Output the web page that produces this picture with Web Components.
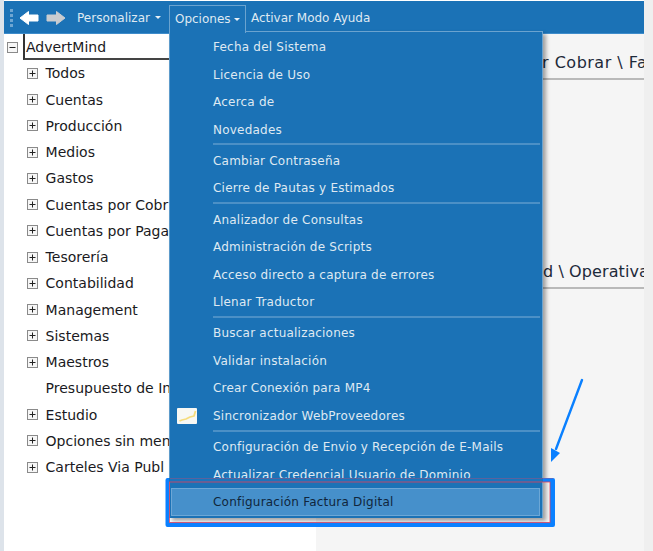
<!DOCTYPE html>
<html lang="es">
<head>
<meta charset="utf-8">
<title>AdvertMind</title>
<style>
  html, body { margin: 0; height: 100%; overflow: hidden; background: #f0f0f0; }
  body { font-family: "DejaVu Sans", sans-serif; font-size: 12px; }
</style>
</head>
<body>
<app-shell>
  <app-toolbar slot="bar"></app-toolbar>
  <tree-view slot="tree">
    <tree-node root open>AdvertMind</tree-node>
    <tree-node>Todos</tree-node>
    <tree-node>Cuentas</tree-node>
    <tree-node>Producción</tree-node>
    <tree-node>Medios</tree-node>
    <tree-node>Gastos</tree-node>
    <tree-node>Cuentas por Cobr</tree-node>
    <tree-node>Cuentas por Paga</tree-node>
    <tree-node>Tesorería</tree-node>
    <tree-node>Contabilidad</tree-node>
    <tree-node>Management</tree-node>
    <tree-node>Sistemas</tree-node>
    <tree-node>Maestros</tree-node>
    <tree-node leaf>Presupuesto de In</tree-node>
    <tree-node>Estudio</tree-node>
    <tree-node>Opciones sin men</tree-node>
    <tree-node>Carteles Via Publ</tree-node>
  </tree-view>
  <content-panel slot="content">
    <panel-title>r Cobrar \ Fa</panel-title>
    <panel-title style="letter-spacing: .1px; padding-left: 227px">d \ Operativa</panel-title>
  </content-panel>
  <options-menu slot="over">
    <menu-item>Fecha del Sistema</menu-item>
    <menu-item>Licencia de Uso</menu-item>
    <menu-item>Acerca de</menu-item>
    <menu-item>Novedades</menu-item>
    <menu-sep></menu-sep>
    <menu-item>Cambiar Contraseña</menu-item>
    <menu-item>Cierre de Pautas y Estimados</menu-item>
    <menu-sep></menu-sep>
    <menu-item>Analizador de Consultas</menu-item>
    <menu-item>Administración de Scripts</menu-item>
    <menu-item>Acceso directo a captura de errores</menu-item>
    <menu-item>Llenar Traductor</menu-item>
    <menu-sep></menu-sep>
    <menu-item>Buscar actualizaciones</menu-item>
    <menu-item>Validar instalación</menu-item>
    <menu-item>Crear Conexión para MP4</menu-item>
    <menu-item icon>Sincronizador WebProveedores</menu-item>
    <menu-sep></menu-sep>
    <menu-item>Configuración de Envio y Recepción de E-Mails</menu-item>
    <menu-item>Actualizar Credencial Usuario de Dominio</menu-item>
    <menu-item active>Configuración Factura Digital</menu-item>
  </options-menu>
  <call-out slot="over"></call-out>
</app-shell>

<script>
'use strict';
class AppShell extends HTMLElement {
  constructor() {
    super();
    this.attachShadow({ mode: 'open' }).innerHTML = `
      <style>
        :host { display: block; position: relative; width: 653px; height: 551px; overflow: hidden; }
        .app {
          display: grid;
          grid-template-columns: 4px 312px 328px 9px;
          grid-template-rows: 1px 33px 1fr;
          height: 100%;
        }
        .edge { grid-row: 1 / 4; grid-column: 1; background: #dde3ea; }
        .top { grid-row: 1; grid-column: 2 / 4; background: #fff; }
        .bar { grid-row: 2; grid-column: 2 / 4; }
        .tree { grid-row: 3; grid-column: 2; background: #fff; }
        .content { grid-row: 3; grid-column: 3; background: #f5f5f5; }
        .right { grid-row: 1 / 4; grid-column: 4; background: #efefef; }
      </style>
      <div class="app">
        <div class="edge"></div>
        <div class="top"></div>
        <div class="bar"><slot name="bar"></slot></div>
        <div class="tree"><slot name="tree"></slot></div>
        <div class="content"><slot name="content"></slot></div>
        <div class="right"></div>
      </div>
      <slot name="over"></slot>`;
  }
}
class AppToolbar extends HTMLElement {
  constructor() {
    super();
    this.attachShadow({ mode: 'open' }).innerHTML = `
      <style>
        :host {
          display: flex; align-items: center; height: 33px; box-sizing: border-box;
          background: #1b72b6; color: #dfe9f2; padding: 1px 0 0 6px; position: relative;
          border-bottom: 1px solid #3e8ccb;
        }
        .grip { width: 3px; height: 18px; margin-right: 6px;
          background: repeating-linear-gradient(#6ea6d2 0 3px, transparent 3px 5px); }
        svg { display: block; }
        .nav { display: flex; gap: 7px; margin-right: 11px; }
        .btn { display: flex; align-items: center; gap: 5px; white-space: nowrap; }
        .caret { width: 0; height: 0; border: 3px solid transparent; border-top: 3px solid #e8f0f6; border-bottom: 0; }
        .pers { margin-right: 8px; }
        .open {
          box-sizing: border-box; width: 77px; height: 28px; padding-left: 5px; margin-top: 1px; gap: 3px;
          background: #1b72b6; border: 1px solid #6ba3cf; border-bottom: 0; z-index: 3; margin-right: 5px; margin-bottom: -1px;
        }
      </style>
      <span class="grip"></span>
      <span class="nav">
        <svg width="20" height="16" viewBox="0 0 20 16"><path d="M1 8 9.5 1.5V5H19v6H9.5v3.5z" fill="#fff" stroke="#fff" stroke-linejoin="round"/></svg>
        <svg width="20" height="16" viewBox="0 0 20 16"><path d="M19 8 10.5 1.5V5H1v6h9.5v3.5z" fill="#c9ccd0" stroke="#c9ccd0" stroke-linejoin="round"/></svg>
      </span>
      <span class="btn pers">Personalizar <i class="caret"></i></span>
      <span class="btn open">Opciones <i class="caret"></i></span>
      <span class="btn">Activar Modo Ayuda</span>`;
  }
}
class TreeView extends HTMLElement {
  constructor() {
    super();
    this.attachShadow({ mode: 'open' }).innerHTML = `
      <style>
        :host { display: flex; flex-direction: column; padding: 0 0 0 3px; color: #1a1a22; font-size: 14px; }
      </style>
      <slot></slot>`;
  }
}
class TreeNode extends HTMLElement {
  constructor() {
    super();
    const sign = this.hasAttribute('open') ? '' : '<path d="M5.5 2.5v6" stroke="#222"/>';
    this.attachShadow({ mode: 'open' }).innerHTML = `
      <style>
        :host { display: flex; align-items: center; height: 26.25px; padding-left: 20px; white-space: nowrap; }
        :host([root]) { padding-left: 0; }
        svg { flex: none; margin-right: 7.6px; }
        :host([root]) svg { margin-right: 5px; }
        :host([leaf]) svg { visibility: hidden; }
        .label { display: block; }
        :host([root]) .label {
          box-sizing: border-box; width: 147px; height: 26.25px; line-height: 26px; padding-left: 1px;
          border-left: 2px solid #333; border-bottom: 2px solid #444;
        }
      </style>
      <svg width="11" height="11" viewBox="0 0 11 11">
        <rect x=".5" y=".5" width="10" height="10" fill="#f6f6f6" stroke="#8a8a8a"/>
        <path d="M2.5 5.5h6" stroke="#222"/>${sign}
      </svg>
      <span class="label"><slot></slot></span>`;
  }
}
class ContentPanel extends HTMLElement {
  constructor() {
    super();
    this.attachShadow({ mode: 'open' }).innerHTML = `
      <style>
        :host { display: block; color: #1d2a3a; font-size: 16px; letter-spacing: .5px; overflow: hidden; height: 100%; }
        .wrap { display: flex; flex-direction: column; gap: 176px; padding-top: 13px; }
      </style>
      <div class="wrap"><slot></slot></div>`;
  }
}
class PanelTitle extends HTMLElement {
  constructor() {
    super();
    this.attachShadow({ mode: 'open' }).innerHTML = `
      <style>
        :host { display: block; height: 33px; line-height: 32px; box-sizing: border-box; padding-left: 226px;
          border-bottom: 2px solid #b9b9b9; white-space: nowrap; overflow: hidden; }
      </style>
      <slot></slot>`;
  }
}
class OptionsMenu extends HTMLElement {
  constructor() {
    super();
    this.attachShadow({ mode: 'open' }).innerHTML = `
      <style>
        :host {
          position: absolute; left: 169px; top: 31px; width: 374px; height: 487px; box-sizing: border-box;
          display: flex; flex-direction: column; padding: 1.3px 2px 2px 1px;
          background: #1b72b6; color: #dfe9f2; letter-spacing: .22px; border: 1px solid #6ba3cf; border-bottom: 0; border-left-color: #5d9bcb;
          box-shadow: 3px 3px 4px rgba(0,0,0,.35);
        }
      </style>
      <slot></slot>`;
  }
}
class MenuItem extends HTMLElement {
  constructor() {
    super();
    const icon = this.hasAttribute('icon') ? `
      <svg width="20" height="16" viewBox="0 0 20 16"><rect width="20" height="16" rx="1" fill="#f8f8f4"/>
      <path d="M2.5 13 5 12l4-1 4-2 4-1 1.5-5" fill="none" stroke="#f6dc7c" stroke-width="1.8" stroke-linejoin="round"/></svg>` : '';
    this.attachShadow({ mode: 'open' }).innerHTML = `
      <style>
        :host { display: flex; align-items: center; height: 27.5px; flex: none; box-sizing: border-box; padding-left: 42px; position: relative; white-space: nowrap; }
        :host([active]) { background: #4690cb; border: 1px solid #6ca7d6; color: #10263c; padding-left: 41px; margin-left: 0; margin-right: 0; }
        svg { position: absolute; left: 6px; top: 6px; }
      </style>
      ${icon}<slot></slot>`;
  }
}
class MenuSep extends HTMLElement {
  constructor() {
    super();
    this.attachShadow({ mode: 'open' }).innerHTML = `
      <style>
        :host { display: block; height: 3.8px; flex: none; box-sizing: border-box; margin-left: 42px; border-top: 2px solid #4c90c6; }
      </style>`;
  }
}
class CallOut extends HTMLElement {
  constructor() {
    super();
    this.attachShadow({ mode: 'open' }).innerHTML = `
      <style>
        :host { position: absolute; left: 0; top: 0; width: 653px; height: 551px; pointer-events: none; }
        svg { display: block; }
      </style>
      <svg width="653" height="551" viewBox="0 0 653 551">
        <path fill-rule="evenodd" fill="#0a80ff" d="M167.5 478H553a2 2 0 0 1 2 2v45a2 2 0 0 1-2 2H167.5a2 2 0 0 1-2-2v-45a2 2 0 0 1 2-2zM169 482v40.5h381V482z"/>
        <rect x="169" y="478" width="374" height="4" fill="#1b74bc"/>
        <rect x="169.5" y="482" width="380.5" height="40.5" fill="none" stroke="#e0405a" stroke-width=".8"/>
        <path d="M170 478.5H553" stroke="#e0405a" stroke-width=".6" opacity=".55"/>
        <path d="M582 380 556 449" fill="none" stroke="#0a80ff" stroke-width="2.4" stroke-linecap="round"/>
        <path d="M551 462 551 448 560 453z" fill="#0a80ff"/>
      </svg>`;
  }
}
customElements.define('app-shell', AppShell);
customElements.define('app-toolbar', AppToolbar);
customElements.define('tree-view', TreeView);
customElements.define('tree-node', TreeNode);
customElements.define('content-panel', ContentPanel);
customElements.define('panel-title', PanelTitle);
customElements.define('options-menu', OptionsMenu);
customElements.define('menu-item', MenuItem);
customElements.define('menu-sep', MenuSep);
customElements.define('call-out', CallOut);
</script>
</body>
</html>
